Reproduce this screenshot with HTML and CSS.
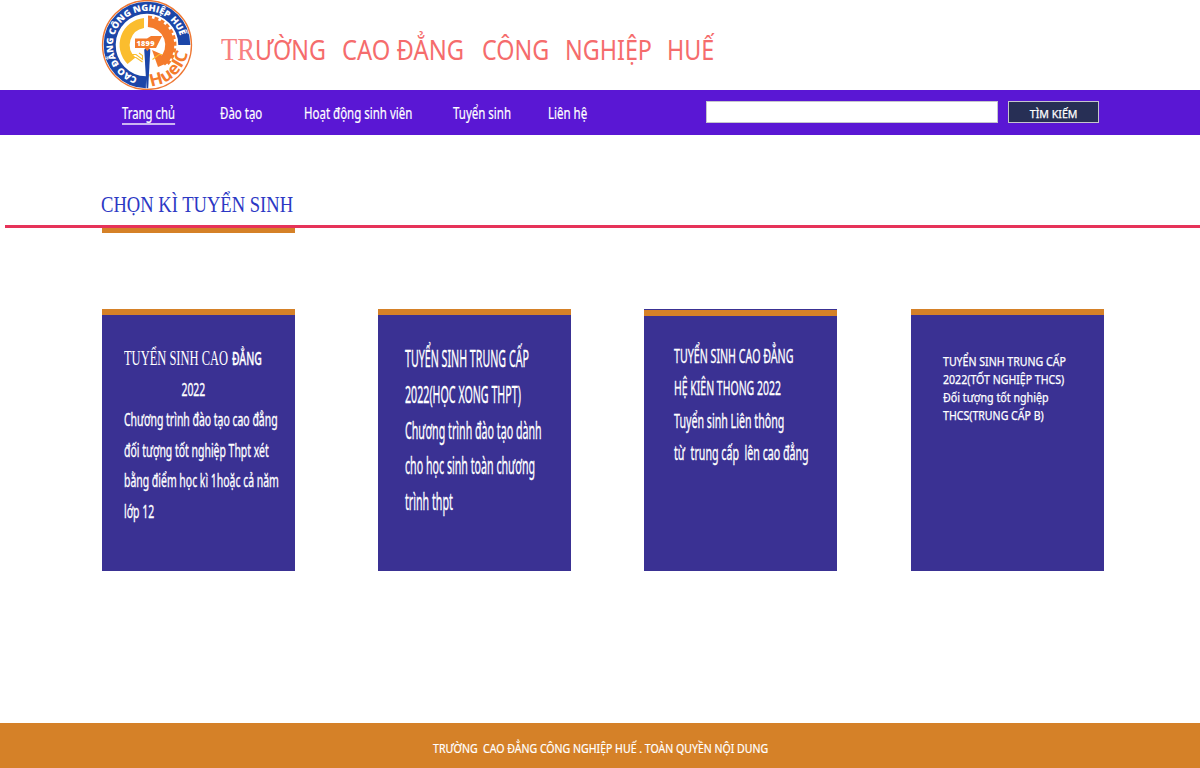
FILE: index.html
```html
<!DOCTYPE html>
<html lang="vi">
<head>
<meta charset="utf-8">
<title>Trường Cao đẳng Công nghiệp Huế</title>
<link rel="stylesheet" href="styles.css">
</head>
<body>
<header class="header">
  <svg class="logo" viewBox="-46 -45 92 90" role="img" aria-label="HueIC">
    <defs>
      <path id="ring-text" d="M-9.600 32.600A34 34 0 1 1 34 0"/>
      <path id="ring-name" d="M4 41.300A41.500 41.500 0 0 0 41.500 0"/>
    </defs>
    <circle r="44.5" fill="#fff" stroke="#ee7733" stroke-width="1.3"/>
    <path d="M-1 37.300A37.300 37.300 0 1 1 37.300 0" fill="none" stroke="#1c46a8" stroke-width="12"/>
    <text class="logo-ring"><textPath href="#ring-text" textLength="141" lengthAdjust="spacingAndGlyphs">CAO ĐẲNG CÔNG NGHIỆP HUẾ</textPath></text>
    <path d="M-3 -27A27 27 0 0 0 -19.500 19L-11.500 12.500A17 17 0 0 1 -3 -17Z" fill="#fbbd2e"/>
    <path d="M1 -22.500A22.500 22.500 0 0 1 15 17" fill="none" stroke="#f47b2c" stroke-width="9"/>
    <path d="M1 -28A28 28 0 0 1 19 20.500" fill="none" stroke="#f47b2c" stroke-width="3" stroke-dasharray="4 2.600"/>
    <path d="M5 5L11 22L18 19L14 9Z" fill="#f47b2c"/>
    <path d="M-16 9.500L-11 9.500L-4.500 14.500V10.500L-8 8M5.500 14.500L12 9.500H15M-15 12.500L-11 12.500L-4.500 17" fill="none" stroke="#fbbd2e" stroke-width="1.100"/>
    <path d="M-2.800 4.500Q.3 2.500 3.300 4.500L1.200 43.200H-.4Z" fill="#1c46a8"/>
    <path d="M-12 -6.500H0L4 -9H15L9 3H3L.3 6L-2.500 3H-12Z" fill="#f47b2c"/>
    <text class="logo-year" x="-10.500" y="1.200" textLength="18">1899</text>
    <text class="logo-name"><textPath href="#ring-name" textLength="53" lengthAdjust="spacingAndGlyphs">HueIC</textPath></text>
  </svg>
  <h1 class="title">
    <span class="word word-1"><span class="squeeze serif tr">TR</span></span>
    <span class="word word-2"><span class="squeeze">ƯỜNG</span></span>
    <span class="word word-3"><span class="squeeze">CAO ĐẲNG</span></span>
    <span class="word word-4"><span class="squeeze">CÔNG</span></span>
    <span class="word word-5"><span class="squeeze">NGHIỆP</span></span>
    <span class="word word-6"><span class="squeeze">HUẾ</span></span>
  </h1>
</header>

<nav class="nav">
  <a class="nav-item active"><span class="squeeze">Trang chủ</span></a>
  <a class="nav-item"><span class="squeeze">Đào tạo</span></a>
  <a class="nav-item"><span class="squeeze">Hoạt động sinh viên</span></a>
  <a class="nav-item"><span class="squeeze">Tuyển sinh</span></a>
  <a class="nav-item"><span class="squeeze">Liên hệ</span></a>
  <input class="search" type="text" aria-label="Tìm kiếm">
  <button class="button"><span>TÌM KIẾM</span></button>
</nav>

<main class="main">
  <h2 class="heading"><span class="squeeze serif">CHỌN KÌ TUYỂN SINH</span></h2>
  <div class="rule"></div>
  <div class="accent"></div>
  <section class="cards">
    <article class="card card-1">
      <div class="copy">
        <div class="line"><span class="squeeze serif">TUYỂN SINH CAO</span><span class="strong">ĐẲNG</span></div>
        <div class="line year">2022</div>
        <div class="line">Chương trình đào tạo cao đẳng</div>
        <div class="line">đối tượng tốt nghiệp Thpt xét</div>
        <div class="line">bằng điểm học kì 1hoặc cả năm</div>
        <div class="line">lớp 12</div>
      </div>
    </article>
    <article class="card card-2">
      <div class="copy">
        <div class="line">TUYỂN SINH TRUNG CẤP</div>
        <div class="line">2022(HỌC XONG THPT)</div>
        <div class="line">Chương trình đào tạo dành</div>
        <div class="line">cho học sinh toàn chương</div>
        <div class="line">trình thpt</div>
      </div>
    </article>
    <article class="card card-3">
      <div class="copy">
        <div class="line">TUYỂN SINH CAO ĐẲNG</div>
        <div class="line narrow">HỆ KIÊN THONG 2022</div>
        <div class="line">Tuyển sinh Liên thông</div>
        <div class="line">từ  trung cấp  lên cao đẳng</div>
      </div>
    </article>
    <article class="card card-4">
      <div class="copy">
        <div class="line">TUYỂN SINH TRUNG CẤP</div>
        <div class="line">2022(TỐT NGHIỆP THCS)</div>
        <div class="line wide">Đối tượng tốt nghiệp</div>
        <div class="line">THCS(TRUNG CẤP B)</div>
      </div>
    </article>
  </section>
</main>

<footer class="footer"><span>TRƯỜNG  CAO ĐẲNG CÔNG NGHIỆP HUẾ . TOÀN QUYỀN NỘI DUNG</span></footer>
</body>
</html>
```

FILE: styles.css
```css
* { box-sizing: border-box; }

body {
  margin: 0;
  width: 1200px;
  height: 768px;
  display: flex;
  flex-direction: column;
  overflow: hidden;
  background: #fff;
  font-family: "Noto Sans", "Open Sans", sans-serif;
}

.squeeze {
  display: inline-block;
  white-space: pre;
  transform-origin: 0 50%;
}
.serif { font-family: "Liberation Serif", serif; line-height: 0; }

/* Header */
.header { display: flex; height: 90px; padding-left: 100.5px; flex: none; }
.logo { width: 92px; height: 90px; flex: none; }
.logo-ring { font: 800 9px "Open Sans", sans-serif; fill: #fff; }
.logo-year { font: 800 7.4px "Open Sans", sans-serif; fill: #fff; }
.logo-name { font: 700 17px "Open Sans", sans-serif; fill: #f47b2c; }

.title {
  display: flex;
  align-items: baseline;
  margin: 30px 0 0 28px;
  font-size: 28px;
  line-height: 38px;
  font-weight: 400;
  color: #f56c6c;
}
.word { flex: none; white-space: nowrap; }
.word .squeeze { transform: scaleX(.833); }
.word .tr { transform: scaleX(.86); font-size: 31px; color: #f88080; }
.word-1 { width: 34.5px; }
.word-2 { width: 87px; }
.word-3 .squeeze { transform: scaleX(.85); }
.word-3 { width: 139.5px; }
.word-4 { width: 83.5px; }
.word-5 { width: 102px; }
.word-6 { width: 60px; }

/* Navigation */
.nav {
  display: grid;
  grid-template-columns: 98px 84px 149px 95px 158px 292px 91px;
  align-items: start;
  height: 45px;
  flex: none;
  padding-left: 122px;
  background: #5a17d4;
  color: #fff;
}
.nav-item { padding-top: 13px; font-size: 16px; line-height: 21px; white-space: nowrap; -webkit-text-stroke: .2px #fff; }
.nav-item .squeeze { transform: scaleX(.718); }
.active .squeeze { border-bottom: 2px solid #cbb5f1; line-height: 19px; transform: scaleX(.708); }
.search { width: 292px; height: 22px; margin-top: 11px; padding: 0 4px; border: 1px solid #c5c5cd; background: #fff; }
.button {
  width: 91px;
  height: 22px;
  margin: 11px 0 0 10px;
  padding: 3px 0 0;
  border: 1px solid #c5c5cd;
  background: #272f55;
  color: #fff;
  font: 11px/18px "Noto Sans", sans-serif;
  -webkit-text-stroke: .25px #fff;
}
.button span { display: inline-block; transform: scaleX(.965); }

/* Content */
.main { flex: 1; }
.heading { margin: 0; padding: 53px 0 0 101px; height: 90px; font-size: 24px; line-height: 30px; font-weight: 400; color: #2c38c4; }
.heading .squeeze { transform: scaleX(.774); }
.rule { height: 3px; margin-left: 5px; background: #e63359; }
.accent { width: 193px; height: 5px; margin-left: 102px; background: #d58128; }
.cards {
  display: grid;
  grid-template-columns: 193px 193px 193px 193px;
  column-gap: 73px;
  margin: 76px 0 0 102px;
}
.card { height: 262px; border-top: 6px solid #d58128; background: #3a3193; color: #fff; }
.card-1 { width: 193px; }
.card-2 { margin-left: 10px; width: 193px; }
.card-3 { margin-left: 10px; width: 193px; }
.card-4 { margin-left: 11px; width: 193px; }

.copy { width: max-content; transform-origin: 0 0; -webkit-text-stroke: .35px #fff; }
.line { white-space: pre; }
.card-1 .copy { margin: 28px 0 0 21.5px; font-size: 18px; line-height: 30.5px; transform: scaleX(.58); }
.card-1 .line:first-child { display: flex; align-items: baseline; }
.card-1 .serif { width: 186px; font-size: 20px; transform: scaleX(1.076); -webkit-text-stroke: 0; }
.card-1 .strong { font-weight: 500; }
.card-1 .year { padding-left: 99px; }
.card-2 .copy { margin: 26px 0 0 26.6px; font-size: 23px; line-height: 35.8px; transform: scaleX(.464); }
.card-3 { padding-top: 0; border-top: 1px solid #3a3193; }
.card-3::before { content: ""; display: block; height: 6px; background: #d58128; }
.card-3 .copy { margin: 24px 0 0 30.4px; font-size: 20px; line-height: 32.3px; transform: scaleX(.533); }
.card-3 .narrow { transform: scaleX(.983); transform-origin: 0 50%; }
.card-4 .copy { margin: 38px 0 0 32px; font-size: 12px; line-height: 18px; transform: scaleX(.882); -webkit-text-stroke-width: .25px; }
.card-4 .wide { transform: scaleX(1.01); transform-origin: 0 50%; }

/* Footer */
.footer {
  display: flex;
  justify-content: center;
  height: 45px;
  flex: none;
  padding: 17px 0 0 1px;
  background: #d58128;
  color: #fff;
  font-size: 12px;
  line-height: 18px;
}
.footer span { white-space: pre; transform: scaleX(.879); -webkit-text-stroke: .2px #fff; }
```
